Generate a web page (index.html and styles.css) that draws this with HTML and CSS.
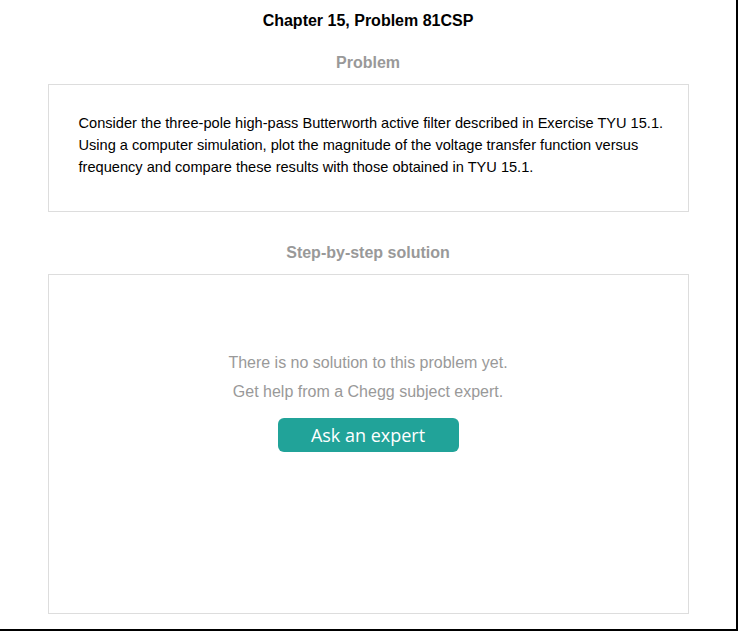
FILE: index.html
```html
<!DOCTYPE html>
<html>
<head>
<meta charset="utf-8">
<link rel="stylesheet" href="styles.css">
</head>
<body>
<div class="page">
  <h1 class="title">Chapter 15, Problem 81CSP</h1>
  <h2 class="section-title">Problem</h2>
  <div class="box problem">
    <p>Consider the three-pole high-pass Butterworth active filter described in Exercise TYU 15.1. Using a computer simulation, plot the magnitude of the voltage transfer function versus frequency and compare these results with those obtained in TYU 15.1.</p>
  </div>
  <h2 class="section-title step">Step-by-step solution</h2>
  <div class="box solution">
    <p class="empty">There is no solution to this problem yet.<br>Get help from a Chegg subject expert.</p>
    <button class="ask">Ask an expert</button>
  </div>
</div>
</body>
</html>
```
FILE: styles.css
```css
html, body { margin: 0; padding: 0; background: #fff; }
body { font-family: "Liberation Sans", Arial, sans-serif; }
.page {
  width: 736px;
  height: 629px;
  border-right: 2px solid #000;
  border-bottom: 2px solid #000;
  display: flex;
  flex-direction: column;
  align-items: center;
  overflow: hidden;
}
.title {
  margin: 12px 0 0;
  font-size: 16px;
  line-height: 18px;
  font-weight: bold;
  color: #000;
}
.section-title {
  margin: 24px 0 0;
  font-size: 16px;
  line-height: 18px;
  font-weight: bold;
  color: #999;
}
.step { margin-top: 32px; }
.box {
  box-sizing: border-box;
  width: 641px;
  border: 1px solid #ddd;
  margin-top: 12px;
}
.problem {
  height: 128px;
  padding: 27px 10px 0 30px;
}
.problem p {
  margin: 0;
  font-size: 14.6px;
  line-height: 22px;
  color: #000;
}
.solution {
  height: 340px;
  display: flex;
  flex-direction: column;
  align-items: center;
  padding-top: 73px;
}
.empty {
  margin: 0;
  font-size: 16px;
  line-height: 29px;
  color: #999;
  text-align: center;
}
.ask {
  margin-top: 12px;
  width: 181px;
  height: 34px;
  border: none;
  border-radius: 6px;
  background: #21a399;
  color: #fff;
  font-family: "Open Sans", sans-serif;
  font-size: 18px;
  padding: 0;
}
```
